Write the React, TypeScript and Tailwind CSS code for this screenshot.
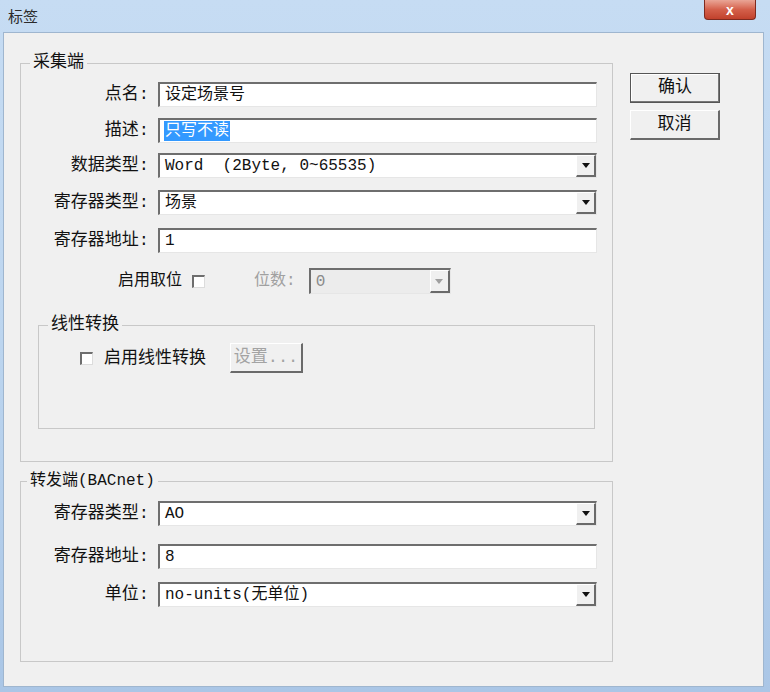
import React from "react";

const ui = "font-['Liberation_Mono','Noto_Sans_CJK_SC',monospace]";

function Arrow({ disabled }: { disabled?: boolean }) {
  return (
    <div className="h-full w-[20px] flex items-center justify-center bg-[#f0f0f0] border-t border-l border-t-white border-l-white border-b-2 border-r-2 border-b-[#6a6a6a] border-r-[#6a6a6a]">
      <svg width="8" height="5" viewBox="0 0 8 5">
        <path d="M0 0h8L4 5z" fill={disabled ? "#a0a0a0" : "#111"} />
      </svg>
    </div>
  );
}

function Edit({
  value,
  combo,
  selected,
  disabled,
  className = "",
}: {
  value: string;
  combo?: boolean;
  selected?: boolean;
  disabled?: boolean;
  className?: string;
}) {
  return (
    <div
      className={`h-[25px] flex items-stretch border-t-2 border-l-2 border-t-[#6e6e6e] border-l-[#6e6e6e] border-b border-r border-b-[#e6e6e6] border-r-[#e6e6e6] ${
        disabled ? "bg-[#ececec]" : "bg-white"
      } ${className}`}
    >
      <div className="flex-1 flex items-center pl-[4px] text-[16px] leading-none">
        <span
          className={`whitespace-pre px-[1px] py-[2px] ${
            selected ? "bg-[#3399ff] text-white" : disabled ? "text-[#8a8a8a]" : "text-[#111]"
          }`}
        >
          {value}
        </span>
      </div>
      {combo && <Arrow disabled={disabled} />}
    </div>
  );
}

function Row({
  label,
  className = "",
  children,
}: {
  label: string;
  className?: string;
  children: React.ReactNode;
}) {
  return (
    <div className={`flex items-center ${className}`}>
      <span className="w-[128px] text-right text-[17px] text-[#111] leading-none whitespace-pre">{label}</span>
      <div className="flex-1 ml-[9px]">{children}</div>
    </div>
  );
}

function Check() {
  return (
    <span className="inline-block w-[13px] h-[13px] bg-white border-t-2 border-l-2 border-t-[#6e6e6e] border-l-[#6e6e6e] border-b border-r border-b-[#dcdcdc] border-r-[#dcdcdc]" />
  );
}

function Button({
  children,
  primary,
  disabled,
  className = "",
}: {
  children: React.ReactNode;
  primary?: boolean;
  disabled?: boolean;
  className?: string;
}) {
  return (
    <div
      className={`h-[30px] flex items-center justify-center bg-[#f0f0f0] text-[17px] ${
        primary
          ? "border border-[#555] shadow-[inset_-1px_-1px_0_#777,inset_1px_1px_0_#fff]"
          : "border-t border-l border-t-white border-l-white border-b-2 border-r-2 border-b-[#6a6a6a] border-r-[#6a6a6a]"
      } ${disabled ? "text-[#a3a3a3]" : "text-[#111]"} ${className}`}
    >
      {children}
    </div>
  );
}

export default function App() {
  return (
    <div className={`w-[770px] h-[692px] bg-gradient-to-b from-[#c6dcf3] via-[#bcd5ef] to-[#aac6e6] relative ${ui}`}>
      {/* title bar */}
      <div className="h-[32px] flex items-center pl-[8px]">
        <span className="text-[15px] text-[#2b2b2b] font-['Noto_Sans_CJK_SC',sans-serif]">标签</span>
      </div>
      <div className="absolute top-0 left-[704px] w-[52px] h-[20px] rounded-b-[4px] border border-t-0 border-[#7e2a1f] bg-gradient-to-b from-[#e9a596] via-[#d4604b] to-[#c1412c] flex items-center justify-center">
        <span className="text-white text-[14px] font-bold leading-none font-['Liberation_Sans',sans-serif]">x</span>
      </div>

      {/* client area */}
      <div className="ml-[3px] w-[761px] h-[655px] bg-[#f0f0f0] border border-[#9fb6cf] flex items-start">
        <div className="ml-[16px] flex flex-col">
          <fieldset className="mt-[19px] w-[593px] h-[410px] border border-[#c8c8c8] pr-[15px]">
            <legend className="ml-[9px] px-[3px] text-[17px] leading-[22px] text-[#111]">采集端</legend>
            <Row label="点名:" className="mt-[8px]">
              <Edit value="设定场景号" />
            </Row>
            <Row label="描述:" className="mt-[11px]">
              <Edit value="只写不读" selected />
            </Row>
            <Row label="数据类型:" className="mt-[10px]">
              <Edit value="Word  (2Byte, 0~65535)" combo />
            </Row>
            <Row label="寄存器类型:" className="mt-[12px]">
              <Edit value="场景" combo />
            </Row>
            <Row label="寄存器地址:" className="mt-[13px]">
              <Edit value="1" />
            </Row>

            <div className="mt-[15px] h-[26px] flex items-center pl-[97px]">
              <span className="text-[16px] text-[#111] leading-none">启用取位</span>
              <span className="ml-[10px] flex">
                <Check />
              </span>
              <span className="ml-[49px] text-[16px] text-[#a0a0a0] leading-none whitespace-pre">位数:</span>
              <Edit value="0" combo disabled className="ml-[13px] w-[142px] h-[26px]" />
            </div>

            <fieldset className="mt-[20px] ml-[17px] mr-[2px] h-[115px] border border-[#c8c8c8]">
              <legend className="ml-[9px] px-[3px] text-[17px] leading-[22px] text-[#111]">线性转换</legend>
              <div className="mt-[7px] pl-[41px] flex items-center">
                <Check />
                <span className="ml-[11px] text-[17px] text-[#111] leading-none">启用线性转换</span>
                <Button disabled className="ml-[24px] w-[73px]">
                  设置...
                </Button>
              </div>
            </fieldset>
          </fieldset>

          <fieldset className="mt-[8px] w-[593px] h-[192px] border border-[#c8c8c8] pr-[15px]">
            <legend className="ml-[6px] px-[3px] text-[16px] leading-[22px] text-[#111]">转发端(BACnet)</legend>
            <Row label="寄存器类型:" className="mt-[9px]">
              <Edit value="AO" combo />
            </Row>
            <Row label="寄存器地址:" className="mt-[18px]">
              <Edit value="8" />
            </Row>
            <Row label="单位:" className="mt-[13px]">
              <Edit value="no-units(无单位)" combo />
            </Row>
          </fieldset>
        </div>

        <div className="ml-[17px] mt-[40px] flex flex-col gap-[7px] w-[90px]">
          <Button primary>确认</Button>
          <Button>取消</Button>
        </div>
      </div>
    </div>
  );
}
